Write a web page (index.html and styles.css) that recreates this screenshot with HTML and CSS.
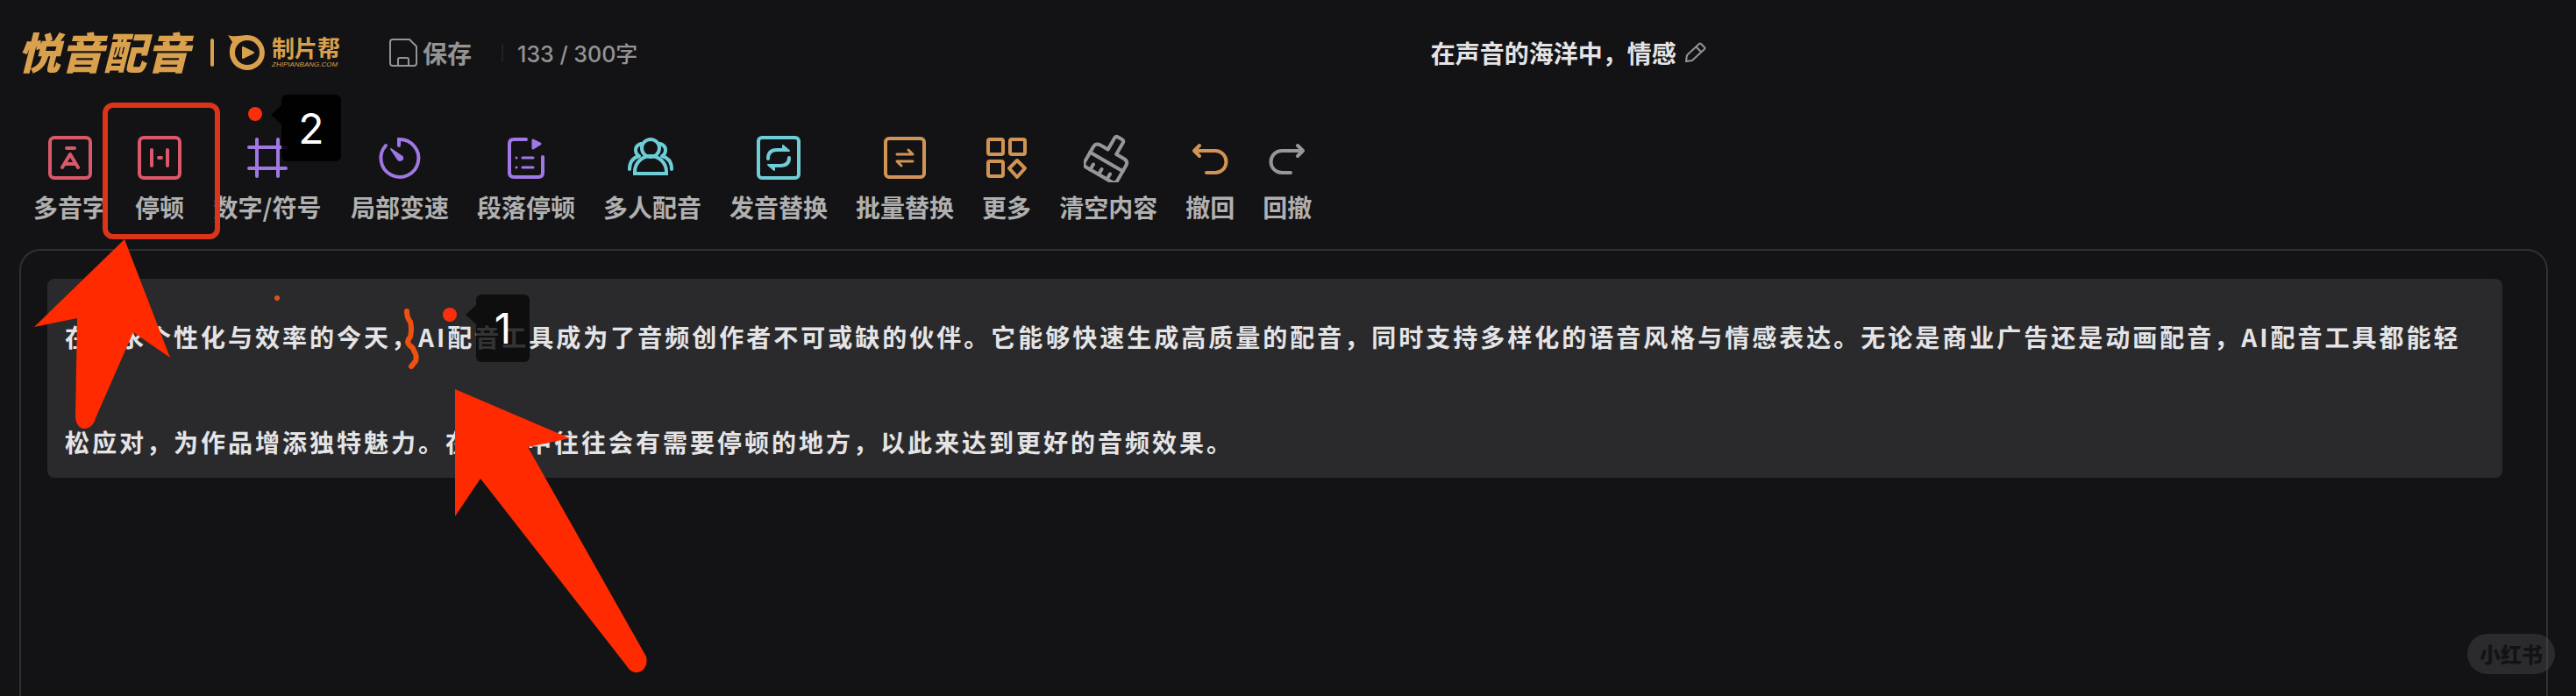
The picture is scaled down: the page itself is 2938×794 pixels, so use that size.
FILE: index.html
```html
<!DOCTYPE html>
<html lang="zh-CN">
<head>
  <meta charset="UTF-8" />
  <meta name="viewport" content="width=device-width, initial-scale=1.0"/>
  <title>悦音配音</title>
  <link rel="stylesheet" href="styles.css">
</head>
<body>

<header class="topbar">
  <a class="brand" href="#">
    <span class="brand-name">悦音配音</span>
    <span class="brand-line"></span>
    <svg class="brand-logo" viewBox="0 0 42 42">
      <path d="M0 1 C8 4 14 1 22 1 A20 20 0 1 1 2 19 C2 15 3 12 5 9 Z" fill="currentColor"/>
      <circle cx="22" cy="21" r="14" fill="#131315"/>
      <path d="M17 15 L29 21 L17 27 Z" fill="currentColor" stroke="currentColor" stroke-width="2" stroke-linejoin="round"/>
    </svg>
    <span class="brand-sub">
      <b>制片帮</b>
      <small>ZHIPIANBANG.COM</small>
    </span>
  </a>
  <button class="save" type="button">
    <svg width="32" height="32" viewBox="0 0 32 32" fill="none" stroke="currentColor" stroke-width="2">
      <path d="M4 1 H23 L31 9 V28 Q31 31 28 31 H4 Q1 31 1 28 V4 Q1 1 4 1 Z"/>
      <path d="M10 31 V24 Q10 22 12 22 H20 Q22 22 22 24 V31"/>
    </svg>
    保存
  </button>
  <span class="divider"></span>
  <span class="counter">133 / 300字</span>
  <div class="doc-title">
    <h1>在声音的海洋中，情感</h1>
    <button class="edit" type="button" aria-label="编辑">
      <svg width="24" height="24" viewBox="0 0 24 24" fill="none" stroke="currentColor" stroke-width="2" stroke-linejoin="round">
        <path d="M1 22 L2 15 L16 2 Q17 1 18 2 L22 6 Q23 7 22 8 L8 21 Z M12 5 L18 11"/>
      </svg>
    </button>
  </div>
</header>

<nav class="toolbar">
  <button class="tool red" type="button">
    <svg viewBox="0 0 56 56">
      <rect x="5" y="5" width="46" height="46" rx="5"/>
      <path d="M24 17 H33 M19 39 L28 24 L37 39 M22 35 H34"/>
    </svg>
    多音字
  </button>
  <button class="tool red" type="button">
    <svg viewBox="0 0 56 56">
      <rect x="5" y="5" width="46" height="46" rx="5"/>
      <path d="M19 19 V37 M37 19 V37 M27 28 H30"/>
    </svg>
    停顿
  </button>
  <button class="tool purple wide" type="button">
    <svg viewBox="0 0 56 56">
      <path d="M16 7 V49 M40 7 V49 M7 16 H49 M7 40 H49"/>
    </svg>
    数字/符号
  </button>
  <button class="tool purple" type="button">
    <svg viewBox="0 0 56 56">
      <path d="M27 14 V7 A21.500 21.500 0 1 1 12 14" stroke-linejoin="miter"/>
      <path class="solid" d="M18 18 L31 27 Q32 31 28 31 L26 30 Z" stroke-width="2"/>
    </svg>
    局部变速
  </button>
  <button class="tool purple" type="button">
    <svg viewBox="0 0 56 56">
      <path d="M28 7 H14 Q9 7 9 12 V45 Q9 50 14 50 H42 Q47 50 47 45 V27"/>
      <path class="solid" d="M36 8 L44 12 L36 17 Z" stroke-width="3"/>
      <path d="M17 28 H17 M17 39 H17 M24 28 H36 M24 39 H36" stroke-width="3"/>
    </svg>
    段落停顿
  </button>
  <button class="tool cyan" type="button">
    <svg viewBox="0 0 56 56">
      <circle cx="26" cy="17" r="10"/>
      <path d="M8 46 V44 A18 18 0 0 1 44 44 V46 Z" stroke-linejoin="miter"/>
      <path d="M15 12 Q9 14 9 19 Q9 24 13 26 Q2 29 2 41 M37 12 Q43 14 43 19 Q43 24 39 26 Q50 29 50 41"/>
    </svg>
    多人配音
  </button>
  <button class="tool cyan" type="button">
    <svg viewBox="0 0 56 56">
      <rect x="5" y="5" width="46" height="46" rx="4"/>
      <path d="M16 29 Q16 19 26 19 H34 M40 28 Q40 37 30 37 H22"/>
      <path class="solid" d="M33 14 L40 20 H33 Z M23 42 L16 36 H23 Z" stroke-width="2"/>
    </svg>
    发音替换
  </button>
  <button class="tool orange" type="button">
    <svg viewBox="0 0 56 56">
      <rect x="6" y="6" width="44" height="44" rx="4"/>
      <path d="M19 24 H37 L32 19 M37 32 H19 L24 37" stroke-width="3"/>
    </svg>
    批量替换
  </button>
  <button class="tool orange" type="button">
    <svg viewBox="0 0 56 56">
      <rect x="7" y="7" width="17" height="17" rx="2"/>
      <rect x="32" y="7" width="17" height="17" rx="2"/>
      <rect x="7" y="32" width="17" height="17" rx="2"/>
      <path d="M40 31 L49 40 L40 50 L31 40 Z"/>
    </svg>
    更多
  </button>
  <button class="tool gray" type="button">
    <svg viewBox="0 0 56 56">
      <g transform="rotate(30 28 28)">
        <path d="M23 20 V5 Q23 2 26 2 H31 Q34 2 34 5 V20 H44 Q50 20 50 26 V45 Q50 50 45 50 H12 Q7 50 7 45 V26 Q7 20 13 20 Z"/>
        <path d="M7 33 H50 M17 50 V43 M28 50 V43 M39 50 V43"/>
      </g>
    </svg>
    清空内容
  </button>
  <button class="tool orange" type="button">
    <svg viewBox="0 0 56 56">
      <path d="M16 14 L10 20 L16 26 M10 20 H34 A12 12 0 0 1 34 45 H24"/>
    </svg>
    撤回
  </button>
  <button class="tool gray" type="button">
    <svg viewBox="0 0 56 56">
      <path d="M40 14 L46 20 L40 26 M46 20 H22 A12 12 0 0 0 22 45 H32"/>
    </svg>
    回撤
  </button>
</nav>

<main class="editor">
  <div class="paragraph">
    <p>在追求个性化与效率的今天，AI配音工具成为了音频创作者不可或缺的伙伴。它能够快速生成高质量的配音，同时支持多样化的语音风格与情感表达。无论是商业广告还是动画配音，AI配音工具都能轻松应对，为作品增添独特魅力。在文案中往往会有需要停顿的地方，以此来达到更好的音频效果。</p>
  </div>
</main>

<!-- Guide marks drawn over the page -->
<div class="guide">
  <svg class="guide-marks" width="800" height="794" viewBox="0 0 800 794">
    <rect x="120" y="120" width="128" height="150" rx="9" fill="none" stroke="#dc3419" stroke-width="6"/>
    <path d="M142 273 L194 408 L152 379 L109 477 C105 493 86 494 86 474 L88 363 L39 373 Z" fill="#ff2a00"/>
    <path d="M519 444 L650 500 L602 510 L737 749 C741 766 723 774 715 760 L548 546 L519 589 Z" fill="#ff2a00"/>
    <circle cx="316" cy="340" r="3" fill="#d4551b"/>
    <path d="M464 355 Q464 363 468 367 Q470 376 468 384 Q463 390 467 394 Q471 396 472 400 Q476 406 474 412 L469 418" fill="none" stroke="#f0500f" stroke-width="6" stroke-linecap="round"/>
    <circle cx="513" cy="359" r="8" fill="#fa2f0c"/>
    <circle cx="291" cy="130" r="8" fill="#fa2f0c"/>
  </svg>
  <span class="callout callout-one">1</span>
  <span class="callout callout-two">2</span>
</div>

<span class="watermark">小红书</span>

</body>
</html>
```
FILE: styles.css
```css
:root {
  --bg: #131315;
  --panel: #2a2a2c;
  --line: #2f3032;
  --gold: #d9a04d;
  --muted: #949494;
  --label: #b0b0b0;
  --text: #e4e4e6;
}

* {
  box-sizing: border-box;
  margin: 0;
  padding: 0;
}

body {
  position: relative;
  display: flex;
  flex-direction: column;
  min-height: 100vh;
  overflow: hidden;
  background: var(--bg);
  color: var(--text);
  font-family: "Noto Sans CJK SC", sans-serif;
  font-size: 28px;
  font-weight: 700;
}

button {
  border: none;
  background: none;
  font: inherit;
  cursor: pointer;
}

/* Top bar */
.topbar {
  display: flex;
  align-items: center;
  height: 120px;
  padding: 0 88px 0 20px;
  color: var(--muted);
}

.brand {
  display: flex;
  align-items: center;
  color: var(--gold);
  text-decoration: none;
}

.brand-name {
  padding-bottom: 4px;
  font-size: 49px;
  font-style: italic;
  font-weight: 900;
  line-height: 56px;
}

.brand-line {
  width: 4px;
  height: 32px;
  margin: 0 16px 0 24px;
  border-radius: 2px;
  background: var(--gold);
}

.brand-logo {
  width: 42px;
  height: 42px;
}

.brand-sub {
  display: flex;
  flex-direction: column;
  width: 80px;
  margin-left: 8px;
  white-space: nowrap;
}

.brand-sub b {
  font-size: 26px;
  font-weight: 700;
  line-height: 28px;
}

.brand-sub small {
  font-family: "Liberation Sans", sans-serif;
  font-size: 8px;
  font-style: italic;
  font-weight: 400;
  line-height: 12px;
}

.save {
  display: flex;
  align-items: center;
  gap: 6px;
  margin-left: 54px;
  color: var(--muted);
}

.divider {
  width: 2px;
  height: 20px;
  margin: 0 16px 0 34px;
  background: #222224;
}

.counter {
  font-family: Inter, "Noto Sans CJK SC", sans-serif;
  font-size: 25px;
  font-weight: 500;
}

.doc-title {
  display: flex;
  align-items: center;
  gap: 10px;
  margin: 0 auto;
}

.doc-title h1 {
  color: var(--text);
  font-size: 28px;
  font-weight: 700;
  white-space: nowrap;
}

.edit {
  display: flex;
  color: var(--muted);
}

/* Toolbar */
.toolbar {
  display: flex;
  gap: 32px;
  height: 164px;
  padding: 32px 38px 0;
}

.tool {
  display: flex;
  flex-direction: column;
  align-items: center;
  gap: 8px;
  height: 104px;
  color: var(--label);
  line-height: 40px;
  white-space: nowrap;
}

.wide {
  min-width: 126px;
}

.tool svg {
  width: 56px;
  height: 56px;
  fill: none;
  stroke-width: 4;
  stroke-linecap: round;
  stroke-linejoin: round;
}

.red svg { stroke: #d9586a; }
.purple svg { stroke: #9f78e4; }
.cyan svg { stroke: #6fcdd8; }
.orange svg { stroke: #d09454; }
.gray svg { stroke: #97979a; }

.purple .solid { fill: #9f78e4; }
.cyan .solid { fill: #6fcdd8; }

/* Editor */
.editor {
  flex: 1;
  margin: 0 32px 0 22px;
  padding: 32px 50px 0 30px;
  border: 2px solid var(--line);
  border-bottom: none;
  border-radius: 24px 24px 0 0;
}

.paragraph {
  display: flow-root;
  padding: 6px 24px 0 20px;
  border-radius: 8px;
  background: var(--panel);
}

.paragraph p {
  margin-bottom: -19px;
  letter-spacing: 3px;
  line-height: 120px;
}

/* Guide marks */
.guide {
  position: absolute;
  top: 0;
  left: 0;
  pointer-events: none;
}

.callout {
  position: absolute;
  display: flex;
  align-items: center;
  justify-content: center;
  border-radius: 6px;
  color: #fff;
  font-family: Inter, sans-serif;
  font-size: 48px;
  font-weight: 400;
}

.callout::before {
  content: "";
  position: absolute;
  right: 100%;
  top: 12px;
  border: solid transparent;
  border-width: 11px 12px 11px 0;
}

.callout-one {
  top: 336px;
  left: 543px;
  width: 61px;
  height: 77px;
  background: rgba(8, 8, 8, 0.8);
}

.callout-one::before {
  border-right-color: rgba(8, 8, 8, 0.8);
}

.callout-two {
  top: 108px;
  left: 321px;
  width: 68px;
  height: 76px;
  background: rgba(0, 0, 0, 0.9);
}

.callout-two::before {
  border-right-color: rgba(0, 0, 0, 0.9);
}

.watermark {
  position: absolute;
  right: 24px;
  bottom: 25px;
  padding: 0 14px;
  border-radius: 23px;
  background: rgba(80, 80, 82, 0.4);
  color: #131315;
  font-size: 24px;
  font-weight: 900;
  line-height: 46px;
}
```
